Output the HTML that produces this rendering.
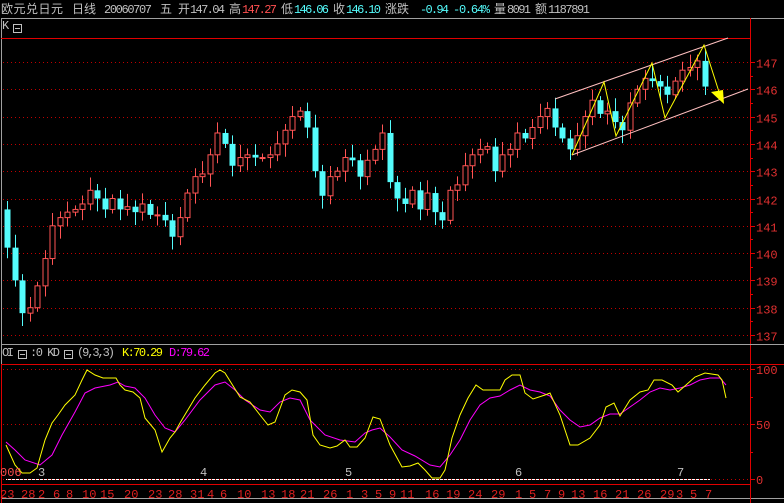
<!DOCTYPE html>
<html><head><meta charset="utf-8"><style>
html,body{margin:0;padding:0;background:#000;width:784px;height:503px;overflow:hidden}
svg{display:block}
text{font-family:"Liberation Mono","Noto Sans CJK SC",monospace;font-size:12px}
</style></head><body>
<svg id="s" width="784" height="503" xmlns="http://www.w3.org/2000/svg">
<rect width="784" height="503" fill="#000"/>
<g font-family="Liberation Mono,Noto Sans CJK SC,monospace">
<text x="1" y="13" fill="#c0c0c0" textLength="62">欧元兑日元</text>
<text x="72" y="13" fill="#c0c0c0">日线</text>
<text x="104" y="13" fill="#c0c0c0" textLength="48">20060707</text>
<text x="160" y="13" fill="#c0c0c0">五</text>
<text x="178" y="13" fill="#c0c0c0">开</text><text x="190" y="13" fill="#c0c0c0" textLength="35">147.04</text>
<text x="229" y="13" fill="#c0c0c0">高</text><text x="242" y="13" fill="#ff5050" textLength="35">147.27</text>
<text x="281" y="13" fill="#c0c0c0">低</text><text x="294" y="13" fill="#54fcfc" textLength="35">146.06</text>
<text x="333" y="13" fill="#c0c0c0">收</text><text x="346" y="13" fill="#54fcfc" textLength="35">146.10</text>
<text x="385" y="13" fill="#c0c0c0">涨跌</text>
<text x="420" y="13" fill="#54fcfc" textLength="29">-0.94</text>
<text x="453" y="13" fill="#54fcfc" textLength="37">-0.64%</text>
<text x="494" y="13" fill="#c0c0c0">量</text><text x="507" y="13" fill="#c0c0c0" textLength="24">8091</text>
<text x="535" y="13" fill="#c0c0c0">额</text><text x="548" y="13" fill="#c0c0c0" textLength="42">1187891</text>
</g>
<rect x="1.5" y="18.5" width="790" height="480" fill="none" stroke="#a0a0a0"/>
<text x="2" y="29" fill="#c0c0c0" font-size="11">K</text>
<rect x="13.5" y="24.5" width="8" height="8" fill="none" stroke="#c0c0c0"/><line x1="15" y1="28.5" x2="20" y2="28.5" stroke="#c0c0c0"/>
<line x1="1" y1="38.5" x2="751" y2="38.5" stroke="#e00000"/>
<line x1="750.5" y1="18" x2="750.5" y2="503" stroke="#e00000"/>
<line x1="1" y1="344.5" x2="784" y2="344.5" stroke="#a0a0a0"/>
<text x="2" y="356" fill="#c0c0c0" textLength="12">OI</text>
<rect x="18.5" y="350.5" width="8" height="8" fill="none" stroke="#c0c0c0"/><line x1="20" y1="354.5" x2="25" y2="354.5" stroke="#c0c0c0"/>
<text x="30" y="356" fill="#c0c0c0" textLength="30">:0 KD</text>
<rect x="64.5" y="350.5" width="8" height="8" fill="none" stroke="#c0c0c0"/><line x1="66" y1="354.5" x2="71" y2="354.5" stroke="#c0c0c0"/>
<text x="77" y="356" fill="#c0c0c0" textLength="38">(9,3,3)</text>
<text x="122" y="356" fill="#ffff00" textLength="41">K:70.29</text>
<text x="169" y="356" fill="#ff00ff" textLength="41">D:79.62</text>
<line x1="1" y1="364.5" x2="784" y2="364.5" stroke="#e00000"/>
<line x1="1.5" y1="364" x2="1.5" y2="503" stroke="#e00000"/>
<line x1="1" y1="484.5" x2="751" y2="484.5" stroke="#e00000"/>
<line x1="6" y1="479.5" x2="710" y2="479.5" stroke="#ffffff"/>
<g id="g"></g>
</svg>
<script>
var g=document.getElementById('g'),h='';
function Y(p){return 62+(147-p)*27.3}
for(var p=137;p<=147;p++){var y=Math.round(Y(p))+.5;h+='<line x1="3" y1="'+y+'" x2="750" y2="'+y+'" stroke="#c00000" stroke-dasharray="1,3"/>';h+='<line x1="751" y1="'+y+'" x2="755" y2="'+y+'" stroke="#e00000"/>';h+='<text x="756" y="'+(y+5)+'" fill="#e03030">'+p+'</text>';}
for(var p=137.5;p<147.5;p++){var y=Math.round(Y(p))+.5;h+='<line x1="751" y1="'+y+'" x2="753" y2="'+y+'" stroke="#e00000"/>';}
[[369,'100'],[424,'50'],[479,'0']].forEach(function(a){h+='<line x1="3" y1="'+(a[0]+.5)+'" x2="750" y2="'+(a[0]+.5)+'" stroke="#c00000" stroke-dasharray="1,3"/><line x1="751" y1="'+(a[0]+.5)+'" x2="755" y2="'+(a[0]+.5)+'" stroke="#e00000"/><text x="756" y="'+(a[0]+5)+'" fill="#e03030">'+a[1]+'</text>';});
h+='<line x1="751" y1="452.5" x2="753" y2="452.5" stroke="#e00000"/><line x1="751" y1="397.5" x2="753" y2="397.5" stroke="#e00000"/>';
var c=[141.6,140.2,139,137.8,138,138.8,139.8,141,141.3,141.5,141.6,141.8,142.3,142.0,141.6,142.0,141.6,141.7,141.5,141.8,141.4,141.4,141.2,140.6,141.3,142.2,142.8,142.9,143.6,144.4,144.0,143.2,143.5,143.6,143.5,143.5,143.6,144.0,144.5,145.0,145.2,144.6,143.0,142.1,142.8,143.0,143.5,143.4,142.8,143.4,143.8,144.4,142.6,142.0,141.8,142.3,141.6,142.2,141.5,141.2,142.3,142.5,143.2,143.6,143.8,143.9,143.0,143.6,143.8,144.4,144.2,144.6,145.0,145.3,144.6,144.2,143.8,144.3,145.0,145.6,145.1,145.2,144.8,144.5,145.5,146.0,146.4,146.3,146.1,145.8,146.3,146.7,146.8,147.04,146.1];
for(var i=1;i<c.length;i++){var o=c[i-1],cl=c[i],x=7+(i-1)*7.5,up=cl>=o,hi=Math.max(o,cl)+0.15+((i*7)%5)*0.08,lo=Math.min(o,cl)-0.15-((i*3)%5)*0.08;
var col=up?'#ff5454':'#54fcfc',yt=Y(Math.max(o,cl)),yb=Y(Math.min(o,cl));if(yb-yt<1)yb=yt+1;var xc=Math.round(x)+.5;
h+='<line x1="'+xc+'" y1="'+Y(hi)+'" x2="'+xc+'" y2="'+Y(lo)+'" stroke="'+col+'"/>';
if(up)h+='<rect x="'+(xc-2.5)+'" y="'+yt+'" width="5" height="'+(yb-yt)+'" fill="#000" stroke="'+col+'"/>';
else h+='<rect x="'+(xc-3)+'" y="'+yt+'" width="6" height="'+(yb-yt)+'" fill="'+col+'"/>';}
h+='<line x1="555" y1="99" x2="728" y2="38" stroke="#ffc0c0"/><line x1="572" y1="155" x2="748" y2="89" stroke="#ffc0c0"/>';
h+='<polyline points="572,155 604,82 616,136 652,63 665,118 704,45 720,95" fill="none" stroke="#ffff00"/><polygon points="711,92 723,90 724,104" fill="#ffff00"/>';
var K='6,445 15,465 22,473 30,473 37,468 45,440 52,423 58,415 65,405 75,395 82,380 87,370 95,375 103,378 110,378 116,378 120,385 125,390 133,392 140,398 145,418 155,430 162,452 170,438 175,432 180,423 195,398 205,385 215,373 220,370 225,373 240,397 250,402 260,415 268,425 275,422 285,395 292,390 300,392 307,400 313,435 320,445 330,448 337,446 345,440 350,447 357,447 365,438 373,417 380,419 390,445 402,467 410,466 418,463 425,470 432,478 440,478 445,470 452,438 460,415 468,398 476,385 483,390 495,390 500,390 505,380 512,375 520,375 525,393 533,399 545,395 550,393 560,415 570,445 578,445 590,438 600,425 606,407 614,403 620,416 630,400 640,392 648,390 654,380 662,380 672,385 678,392 686,385 695,377 705,373 718,375 722,380 726,398';
var D='6,442 15,450 25,460 40,465 52,455 62,435 75,412 85,393 95,388 110,385 118,382 125,386 135,388 145,398 155,415 165,428 175,432 185,420 200,400 215,385 225,382 235,390 245,400 260,410 270,412 280,402 290,398 300,400 310,420 325,435 340,440 355,442 365,433 372,430 380,428 390,437 402,450 415,456 430,465 440,467 450,455 460,440 470,420 480,405 490,398 500,396 510,390 520,385 530,390 540,392 550,396 560,410 570,420 580,427 590,425 600,418 610,414 620,414 630,407 640,400 650,392 660,388 670,390 680,388 690,385 700,380 710,378 720,378 726,385';
h+='<polyline points="'+D+'" fill="none" stroke="#ff00ff"/><polyline points="'+K+'" fill="none" stroke="#ffff00"/>';
h+='<text x="0" y="476" fill="#ff5050">006</text>';
[[38,'3'],[200,'4'],[345,'5'],[515,'6'],[677,'7']].forEach(function(a){h+='<text x="'+a[0]+'" y="476" fill="#c0c0c0">'+a[1]+'</text>';});
var d=[[0,'23'],[21,'28'],[38,'2'],[53,'6'],[66,'8'],[82,'10'],[100,'15'],[124,'20'],[148,'23'],[168,'28'],[190,'31'],[207,'4'],[220,'6'],[237,'10'],[261,'13'],[281,'18'],[300,'21'],[323,'26'],[346,'1'],[361,'3'],[375,'5'],[389,'9'],[400,'11'],[425,'16'],[446,'19'],[468,'24'],[491,'29'],[515,'1'],[529,'5'],[544,'7'],[558,'9'],[571,'13'],[593,'16'],[615,'21'],[637,'26'],[660,'29'],[676,'3'],[690,'5'],[705,'7']];
d.forEach(function(a){h+='<text x="'+a[0]+'" y="498" fill="#e02020" font-size="11">'+a[1]+'</text>';});
g.innerHTML=h;
</script>
</body></html>
